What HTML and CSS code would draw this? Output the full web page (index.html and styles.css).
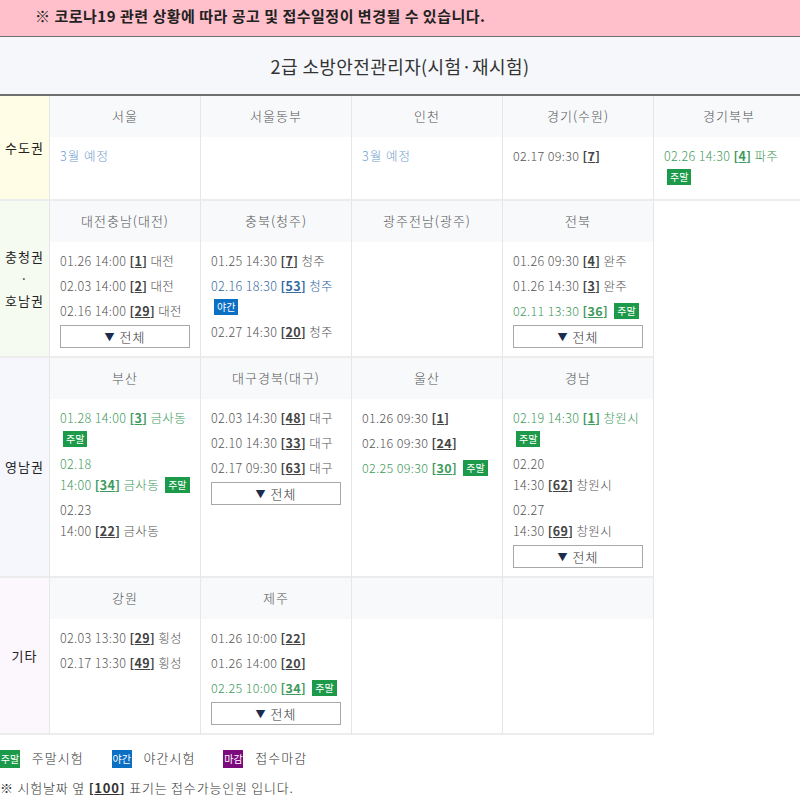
FILE: index.html
```html
<!doctype html>
<html>
<head>
<meta charset="utf-8">
<title>2급 소방안전관리자 시험일정</title>
<link rel="stylesheet" href="styles.css">
</head>
<body>
<div class="notice">※ 코로나19 관련 상황에 따라 공고 및 접수일정이 변경될 수 있습니다.</div>
<div class="title">2급 소방안전관리자(시험·재시험)</div>

<div class="board">
	<div class="area">
		<div class="area-name capital">수도권</div>
		<div class="sites">
			<div class="site">
				<div class="site-name">서울</div>
				<div class="site-body"><p class="plan">3월 예정</p></div>
			</div>
			<div class="site">
				<div class="site-name">서울동부</div>
				<div class="site-body"></div>
			</div>
			<div class="site">
				<div class="site-name">인천</div>
				<div class="site-body"><p class="plan">3월 예정</p></div>
			</div>
			<div class="site">
				<div class="site-name">경기(수원)</div>
				<div class="site-body"><p><span>02.17</span> <span class="t">09:30 <b>[<u>7</u>]</b></span></p></div>
			</div>
			<div class="site">
				<div class="site-name">경기북부</div>
				<div class="site-body"><p class="wkd"><span>02.26</span> <span class="t">14:30 <b>[<u>4</u>]</b> 파주</span> <span class="tag tag-wkd">주말</span></p></div>
			</div>
		</div>
	</div>

	<div class="area">
		<div class="area-name middle">충청권<br>·<br>호남권</div>
		<div class="sites">
			<div class="site">
				<div class="site-name">대전충남(대전)</div>
				<div class="site-body">
					<p><span>01.26</span> <span class="t">14:00 <b>[<u>1</u>]</b> 대전</span></p>
					<p><span>02.03</span> <span class="t">14:00 <b>[<u>2</u>]</b> 대전</span></p>
					<p><span>02.16</span> <span class="t">14:00 <b>[<u>29</u>]</b> 대전</span></p>
					<button class="more"><span class="arr">▼</span> 전체</button>
				</div>
			</div>
			<div class="site">
				<div class="site-name">충북(청주)</div>
				<div class="site-body">
					<p><span>01.25</span> <span class="t">14:30 <b>[<u>7</u>]</b> 청주</span></p>
					<p class="ngt"><span>02.16</span> <span class="t">18:30 <b>[<u>53</u>]</b> 청주</span> <span class="tag tag-ngt">야간</span></p>
					<p><span>02.27</span> <span class="t">14:30 <b>[<u>20</u>]</b> 청주</span></p>
				</div>
			</div>
			<div class="site">
				<div class="site-name">광주전남(광주)</div>
				<div class="site-body"></div>
			</div>
			<div class="site">
				<div class="site-name">전북</div>
				<div class="site-body">
					<p><span>01.26</span> <span class="t">09:30 <b>[<u>4</u>]</b> 완주</span></p>
					<p><span>01.26</span> <span class="t">14:30 <b>[<u>3</u>]</b> 완주</span></p>
					<p class="wkd"><span>02.11</span> <span class="t">13:30 <b>[<u>36</u>]</b></span> <span class="tag tag-wkd">주말</span></p>
					<button class="more"><span class="arr">▼</span> 전체</button>
				</div>
			</div>
		</div>
	</div>

	<div class="area">
		<div class="area-name south">영남권</div>
		<div class="sites">
			<div class="site">
				<div class="site-name">부산</div>
				<div class="site-body">
					<p class="wkd"><span>01.28</span> <span class="t">14:00 <b>[<u>3</u>]</b> 금사동</span> <span class="tag tag-wkd">주말</span></p>
					<p class="wkd"><span>02.18</span> <span class="t">14:00 <b>[<u>34</u>]</b> 금사동</span> <span class="tag tag-wkd">주말</span></p>
					<p><span>02.23</span> <span class="t">14:00 <b>[<u>22</u>]</b> 금사동</span></p>
				</div>
			</div>
			<div class="site">
				<div class="site-name">대구경북(대구)</div>
				<div class="site-body">
					<p><span>02.03</span> <span class="t">14:30 <b>[<u>48</u>]</b> 대구</span></p>
					<p><span>02.10</span> <span class="t">14:30 <b>[<u>33</u>]</b> 대구</span></p>
					<p><span>02.17</span> <span class="t">09:30 <b>[<u>63</u>]</b> 대구</span></p>
					<button class="more"><span class="arr">▼</span> 전체</button>
				</div>
			</div>
			<div class="site">
				<div class="site-name">울산</div>
				<div class="site-body">
					<p><span>01.26</span> <span class="t">09:30 <b>[<u>1</u>]</b></span></p>
					<p><span>02.16</span> <span class="t">09:30 <b>[<u>24</u>]</b></span></p>
					<p class="wkd"><span>02.25</span> <span class="t">09:30 <b>[<u>30</u>]</b></span> <span class="tag tag-wkd">주말</span></p>
				</div>
			</div>
			<div class="site">
				<div class="site-name">경남</div>
				<div class="site-body">
					<p class="wkd"><span>02.19</span> <span class="t">14:30 <b>[<u>1</u>]</b> 창원시</span> <span class="tag tag-wkd">주말</span></p>
					<p><span>02.20</span> <span class="t">14:30 <b>[<u>62</u>]</b> 창원시</span></p>
					<p><span>02.27</span> <span class="t">14:30 <b>[<u>69</u>]</b> 창원시</span></p>
					<button class="more"><span class="arr">▼</span> 전체</button>
				</div>
			</div>
		</div>
	</div>

	<div class="area">
		<div class="area-name etc">기타</div>
		<div class="sites">
			<div class="site">
				<div class="site-name">강원</div>
				<div class="site-body">
					<p><span>02.03</span> <span class="t">13:30 <b>[<u>29</u>]</b> 횡성</span></p>
					<p><span>02.17</span> <span class="t">13:30 <b>[<u>49</u>]</b> 횡성</span></p>
				</div>
			</div>
			<div class="site">
				<div class="site-name">제주</div>
				<div class="site-body">
					<p><span>01.26</span> <span class="t">10:00 <b>[<u>22</u>]</b></span></p>
					<p><span>01.26</span> <span class="t">14:00 <b>[<u>20</u>]</b></span></p>
					<p class="wkd"><span>02.25</span> <span class="t">10:00 <b>[<u>34</u>]</b></span> <span class="tag tag-wkd">주말</span></p>
					<button class="more"><span class="arr">▼</span> 전체</button>
				</div>
			</div>
			<div class="site">
				<div class="site-name"></div>
				<div class="site-body"></div>
			</div>
			<div class="site">
				<div class="site-name"></div>
				<div class="site-body"></div>
			</div>
		</div>
	</div>
</div>

<div class="legend">
	<span class="key"><span class="tag tag-wkd">주말</span> 주말시험</span>
	<span class="key"><span class="tag tag-ngt">야간</span> 야간시험</span>
	<span class="key"><span class="tag tag-end">마감</span> 접수마감</span>
</div>
<p class="foot">※ 시험날짜 옆 <b>[<u>100</u>]</b> 표기는 접수가능인원 입니다.</p>
</body>
</html>
```

FILE: styles.css
```css
html{overflow:hidden;}
body{margin:0;background:#fff;color:#555;font-family:"Noto Sans CJK KR","Liberation Sans",sans-serif;font-size:12px;}
p{margin:0;}

.notice{height:36px;line-height:31px;padding-left:35px;background:#ffc0cb;color:#222;font-size:15px;font-weight:bold;letter-spacing:0.5px;}
.title{height:57px;line-height:58px;text-align:center;background:#f5f7fa;color:#333;font-size:18px;letter-spacing:0.4px;
	border-top:1px solid #6f6f6f;border-bottom:2px solid #707070;}

.board{width:805px;}
.area{display:flex;}
.area-name{width:49px;flex:none;display:flex;align-items:center;justify-content:center;text-align:center;
	color:#222;font-size:13px;line-height:22px;letter-spacing:1px;border-right:1px solid #e6e6e6;border-bottom:2px solid #ececec;}
.capital{background:#fffde6;}
.middle{background:#f6fbf1;}
.south{background:#f5f7fc;}
.etc{background:#fcf7fc;}

.sites{display:flex;}
.site{width:150px;display:flex;flex-direction:column;border-right:1px solid #e6e6e6;border-bottom:2px solid #ececec;}
.site-name{height:41px;line-height:40px;text-align:center;background:#f7f9fb;color:#555;font-size:13px;letter-spacing:1px;font-weight:300;}
.site-body{flex:1;padding:8px 10px 8px;}
.site-body p{line-height:21px;margin-bottom:4px;font-size:12.5px;letter-spacing:0.35px;font-weight:300;}
.site-body .t{white-space:nowrap;}
.site-body b{color:#444;font-weight:bold;}
.plan{color:#6f9dcc;letter-spacing:1px !important;}
.wkd,.wkd b{color:#3f9a5e;}
.ngt,.ngt b{color:#35699f;}

.tag{display:inline-block;padding:0 3px;height:16px;line-height:16px;font-size:10px;color:#fff;vertical-align:1px;letter-spacing:0;font-weight:normal;}
.site-body .tag{margin-left:3px;}
.tag-wkd{background:#1c9a4a;}
.tag-ngt{background:#0b6fc4;}
.tag-end{background:#7d0a7d;}

.more{display:block;width:130px;height:23px;padding:0;background:#fff;border:1px solid #a8a8a8;
	font-family:inherit;font-size:13px;color:#333;line-height:20px;letter-spacing:1px;font-weight:300;}
.arr{color:#1b2c4c;font-size:10px;vertical-align:1px;}

.legend{display:flex;gap:28px;margin-top:14px;font-size:13px;color:#333;line-height:18px;letter-spacing:1px;font-weight:300;}
.legend .tag{width:20px;padding:0;height:18px;line-height:18px;text-align:center;font-size:10px;margin-right:8px;vertical-align:0;}
.foot{margin-top:11px;font-size:13px;color:#333;line-height:18px;letter-spacing:0.8px;font-weight:300;}
.foot b{color:#333;font-weight:bold;}
```
